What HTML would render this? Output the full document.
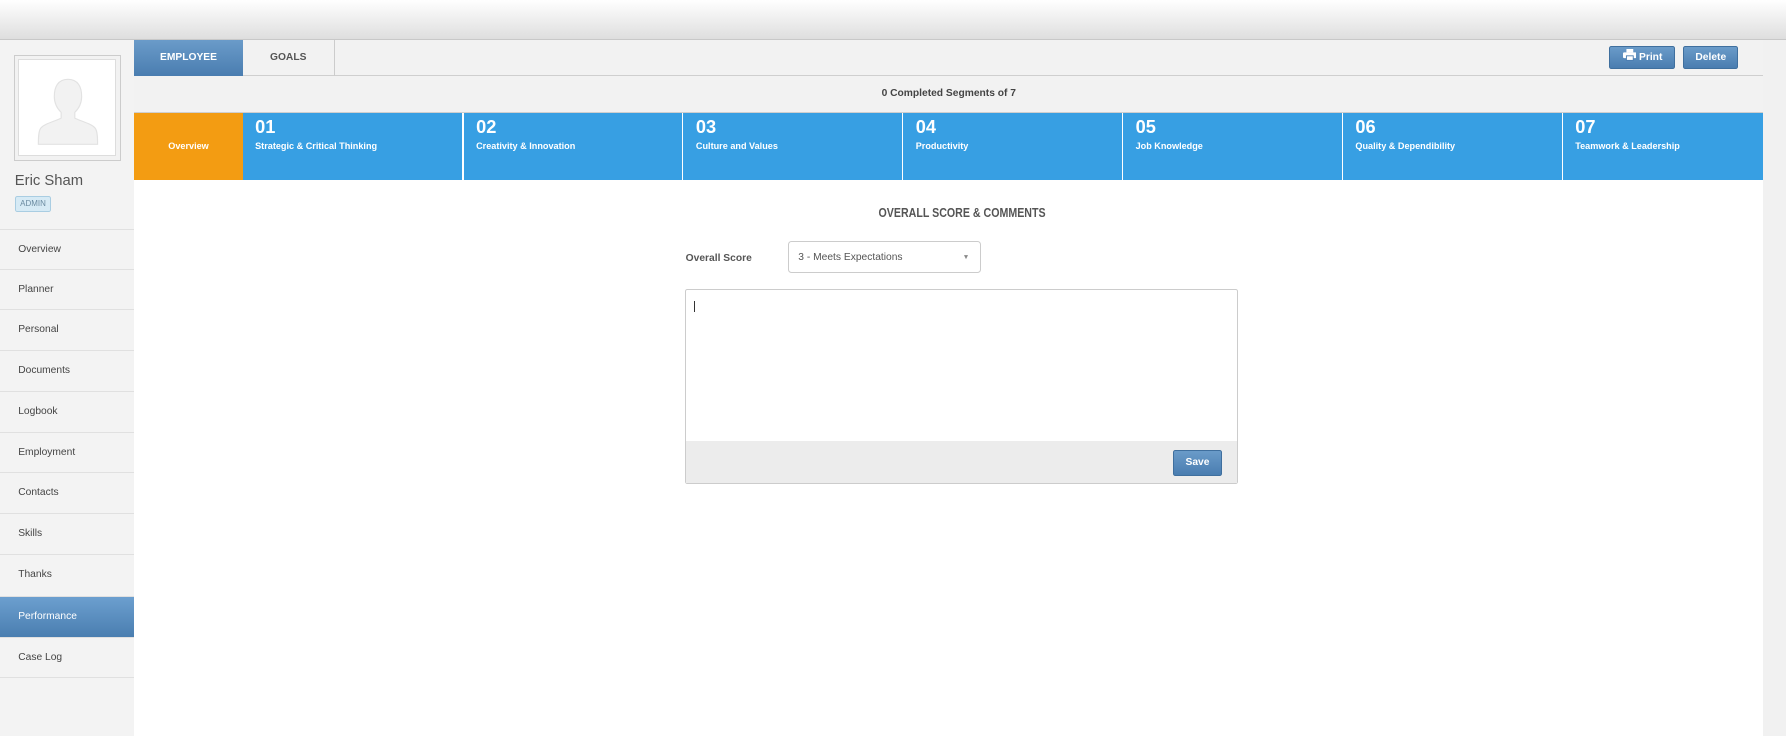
<!DOCTYPE html>
<html><head><meta charset="utf-8">
<style>
*{box-sizing:border-box;margin:0;padding:0}
html,body{width:1786px;height:736px;overflow:hidden;background:#fff}
#w{zoom:1.139;width:1568px;height:646px;position:relative;font-family:"Liberation Sans",Arial,sans-serif;background:#fff}
.a{position:absolute}
.top{left:0;top:0;width:1568px;height:35px;background:linear-gradient(#fff,#dedede);border-bottom:1px solid #c8c8c8}
.side{left:0;top:35px;width:118px;height:611px;background:#f3f3f3}
.mi{position:absolute;left:0;width:118px;height:36px;border-top:1px solid #e0e0e0;font-size:9px;color:#444;padding-left:16px;line-height:35px}
.act{background:linear-gradient(#6c9fcf,#4a7eb0);color:#fff}
.tabbar{left:118px;top:35px;width:1430px;height:32px;background:#f2f2f2;border-bottom:1px solid #cfcfcf}
.btn{position:absolute;background:linear-gradient(#6a9bc9,#4a7db0);border:1px solid #3f6f9e;border-radius:2px;color:#fff;font-size:9px;font-weight:bold;text-align:center}
.seg{position:absolute;top:99px;height:59px;background:#379fe3;color:#fff;padding-left:11px}
.seg b{display:block;font-size:16px;margin-top:5px;line-height:16px}
.seg i{display:block;font-style:normal;font-weight:bold;font-size:8px;margin-top:4px}
</style></head><body><div id="w">
<div class="a top"></div>
<div class="a side">
 <div class="a" style="left:12px;top:13px;width:94px;height:93px;border:1px solid #ccc;background:#f2f2f2;padding:3px">
  <div style="width:86px;height:85px;background:#fff;border:1px solid #ddd;position:relative">
   <svg width="86" height="85" viewBox="0 0 86 85"><path d="M43 17c-9 0-12 7-12 15 0 6 3 11 6 14v5c-6 3-15 5-18 9-2 3-2 9-2 14h52c0-5 0-11-2-14-3-4-12-6-18-9v-5c3-3 6-8 6-14 0-8-3-15-12-15z" fill="#f2f2f2" stroke="#e2e2e2"/></svg>
  </div>
 </div>
 <div class="a" style="left:13px;top:117px;font-size:13px;color:#555">Eric Sham</div>
 <div class="a" style="left:13px;top:137px;width:32px;height:14px;background:#d6eaf5;border:1px solid #a9cde2;border-radius:2px;font-size:7px;color:#6a8aa0;text-align:center;line-height:12px">ADMIN</div>
 <div class="mi" style="top:166px">Overview</div>
 <div class="mi" style="top:201px">Planner</div>
 <div class="mi" style="top:236px">Personal</div>
 <div class="mi" style="top:272px">Documents</div>
 <div class="mi" style="top:308px">Logbook</div>
 <div class="mi" style="top:344px">Employment</div>
 <div class="mi" style="top:379px">Contacts</div>
 <div class="mi" style="top:415px">Skills</div>
 <div class="mi" style="top:451px">Thanks</div>
 <div class="mi act" style="top:488px">Performance</div>
 <div class="mi" style="top:524px">Case Log</div>
 <div class="mi" style="top:559px;height:1px"></div>
</div>
<div class="a" style="left:1548px;top:35px;width:20px;height:611px;background:#f1f1f1"></div>
<div class="a tabbar"></div>
<div class="a" style="left:118px;top:35px;width:95px;height:32px;background:linear-gradient(#6a9bc9,#4a7db0);color:#fff;font-size:9px;font-weight:bold;text-align:center;line-height:32px">EMPLOYEE</div>
<div class="a" style="left:213px;top:35px;width:81px;height:32px;border-right:1px solid #ccc;color:#555;font-size:9px;font-weight:bold;text-align:center;line-height:32px">GOALS</div>
<div class="btn" style="left:1413px;top:40px;width:58px;height:21px;line-height:19px">
 <svg width="12" height="10" viewBox="0 0 12 10" style="vertical-align:-1px"><rect x="3" y="0" width="6" height="3" fill="#fff"/><rect x="0" y="3" width="12" height="5" rx="1" fill="#fff"/><rect x="3" y="6" width="6" height="4" fill="#fff" stroke="#4a7db0" stroke-width=".8"/></svg> Print</div>
<div class="btn" style="left:1478px;top:40px;width:48px;height:21px;line-height:19px">Delete</div>
<div class="a" style="left:118px;top:67px;width:1430px;height:32px;background:#f2f2f2;border-bottom:1px solid #cfcfcf;font-size:9px;font-weight:bold;color:#444;text-align:center;line-height:32px">0 Completed Segments of 7</div>
<div class="seg" style="left:118px;width:95px;background:#f39c12;padding:0;text-align:center;font-size:8px;font-weight:bold;line-height:59px">Overview</div>
<div class="seg" style="left:213px;width:193px"><b>01</b><i>Strategic &amp; Critical Thinking</i></div>
<div class="seg" style="left:407px;width:192px"><b>02</b><i>Creativity &amp; Innovation</i></div>
<div class="seg" style="left:600px;width:192px"><b>03</b><i>Culture and Values</i></div>
<div class="seg" style="left:793px;width:192px"><b>04</b><i>Productivity</i></div>
<div class="seg" style="left:986px;width:192px"><b>05</b><i>Job Knowledge</i></div>
<div class="seg" style="left:1179px;width:192px"><b>06</b><i>Quality &amp; Dependibility</i></div>
<div class="seg" style="left:1372px;width:176px"><b>07</b><i>Teamwork &amp; Leadership</i></div>
<div class="a" style="left:600px;top:181px;width:490px;text-align:center;font-size:11px;font-weight:bold;color:#555;font-family:'Liberation Sans Narrow','Liberation Sans',sans-serif;transform:scaleX(.85)">OVERALL SCORE &amp; COMMENTS</div>
<div class="a" style="left:602px;top:222px;font-size:9px;font-weight:bold;color:#555">Overall Score</div>
<div class="a" style="left:692px;top:212px;width:169px;height:28px;border:1px solid #ccc;border-radius:3px;font-size:9px;color:#555;padding:8px 0 0 8px">3 - Meets Expectations<span style="position:absolute;right:9px;top:10px;font-size:6px;color:#888">▼</span></div>
<div class="a" style="left:601px;top:254px;width:486px;height:171px;border:1px solid #ccc;border-radius:2px;background:#fff">
 <div class="a" style="left:7px;top:9px;width:1px;height:10px;background:#333"></div>
 <div class="a" style="left:0;top:132px;width:484px;height:37px;background:#ececec"></div>
 <div class="btn" style="left:428px;top:140px;width:43px;height:23px;line-height:21px">Save</div>
</div>
</div></body></html>
